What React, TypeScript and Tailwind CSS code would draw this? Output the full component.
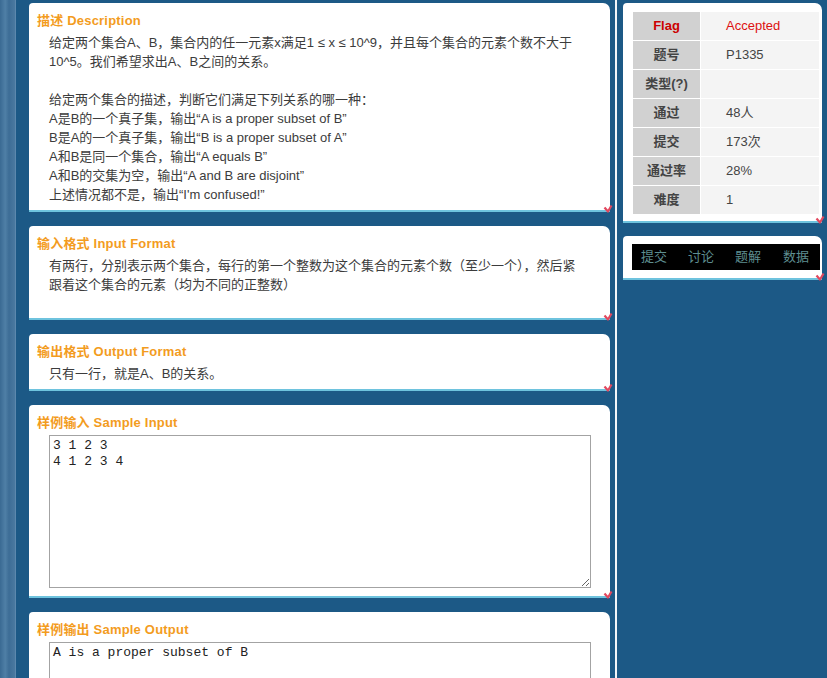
import React from "react";

const cjk = "font-['Liberation_Sans','Noto_Sans_CJK_SC',sans-serif]";

function Corner() {
  return (
    <svg
      className="absolute -right-[3px] -bottom-[4px]"
      width="10"
      height="10"
      viewBox="0 0 10 10"
    >
      <path d="M1.5 3.5 L5 7.5 L8.5 1.5" fill="none" stroke="#e2485e" strokeWidth="2.2" strokeLinejoin="round" />
    </svg>
  );
}

function Card({ title, children, pb = "pb-[6px]" }: { title: string; children: React.ReactNode; pb?: string }) {
  return (
    <div className={`relative rounded-tl-[4px] rounded-tr-[7px] border-b-2 border-[#6ec3de] bg-white pt-[8px] ${pb}`}>
      <div className="pl-[8px] text-[13px] leading-[19px] font-bold tracking-[0.2px] text-[#f39c1e]">{title}</div>
      <div className="mt-[3px] pl-[20px] pr-[22px] text-[13px] leading-[19px] text-[#3c3c3c]">{children}</div>
      <Corner />
    </div>
  );
}

function Sample({ value }: { value: string }) {
  return (
    <textarea
      readOnly
      value={value}
      className="mt-[2px] block h-[153px] w-[542px] border border-[#a3a3a3] bg-white px-[3px] py-[2px] font-['Liberation_Mono',monospace] text-[13px] leading-[16px] text-[#222] outline-none"
    />
  );
}

const rows: [string, string, boolean][] = [
  ["Flag", "Accepted", true],
  ["题号", "P1335", false],
  ["类型(?)", "", false],
  ["通过", "48人", false],
  ["提交", "173次", false],
  ["通过率", "28%", false],
  ["难度", "1", false],
];

export default function App() {
  return (
    <div className={`flex h-[678px] w-[827px] overflow-hidden bg-[#1c5986] ${cjk}`}>
      <div className="w-[15px] shrink-0 bg-[linear-gradient(90deg,#3a6a93_0%,#4f7fa6_35%,#3d6d96_60%,#4a79a0_100%)]" />
      <div className="w-[1px] shrink-0 bg-[#5c88ad]" />
      <div className="w-[13px] shrink-0" />

      <div className="flex w-[581px] shrink-0 flex-col gap-[14px] pt-[3px]">
        <Card title="描述 Description">
          <p>给定两个集合A、B，集合内的任一元素x满足1 ≤ x ≤ 10^9，并且每个集合的元素个数不大于10^5。我们希望求出A、B之间的关系。</p>
          <p className="h-[19px]" />
          <p>给定两个集合的描述，判断它们满足下列关系的哪一种：</p>
          <p>A是B的一个真子集，输出“A is a proper subset of B”</p>
          <p>B是A的一个真子集，输出“B is a proper subset of A”</p>
          <p>A和B是同一个集合，输出“A equals B”</p>
          <p>A和B的交集为空，输出“A and B are disjoint”</p>
          <p>上述情况都不是，输出“I'm confused!”</p>
        </Card>
        <Card title="输入格式 Input Format">
          <p>有两行，分别表示两个集合，每行的第一个整数为这个集合的元素个数（至少一个），然后紧跟着这个集合的元素（均为不同的正整数）</p>
          <p className="h-[18px]" />
        </Card>
        <Card title="输出格式 Output Format">
          <p>只有一行，就是A、B的关系。</p>
        </Card>
        <Card title="样例输入 Sample Input" pb="pb-[8px]">
          <Sample value={"3 1 2 3\n4 1 2 3 4"} />
        </Card>
        <Card title="样例输出 Sample Output" pb="pb-[8px]">
          <Sample value={"A is a proper subset of B"} />
        </Card>
      </div>

      <div className="w-[5px] shrink-0" />
      <div className="w-[2px] shrink-0 bg-[#f2f6f9]" />
      <div className="w-[6px] shrink-0" />

      <div className="flex w-[199px] shrink-0 flex-col gap-[13px] pt-[3px]">
        <div className="relative rounded-tl-[4px] rounded-tr-[7px] border-b-2 border-[#6ec3de] bg-white pt-[8px] pr-[2px] pb-[6px] pl-[9px]">
          <table className="w-[188px] border-collapse text-[13px]">
            <tbody>
              {rows.map(([k, v, red]) => (
                <tr key={k} className="h-[29px]">
                  <td
                    className={`w-[68px] border border-white bg-[#d1d1d1] text-center font-bold ${red ? "text-[#cc0000]" : "text-[#444]"}`}
                  >
                    {k}
                  </td>
                  <td className={`border border-white bg-[#f4f4f4] pl-[25px] ${red ? "text-[#dd1111]" : "text-[#444]"}`}>{v}</td>
                </tr>
              ))}
            </tbody>
          </table>
          <Corner />
        </div>

        <div className="relative rounded-tl-[4px] rounded-tr-[7px] border-b-2 border-[#6ec3de] bg-white pt-[8px] pr-[2px] pb-[8px] pl-[9px]">
          <div className="flex h-[26px] w-[188px] items-center bg-black pl-[9px] text-[13px] text-[#5e8e90]">
            <span className="w-[47px]">提交</span>
            <span className="w-[47px]">讨论</span>
            <span className="w-[48px]">题解</span>
            <span>数据</span>
          </div>
          <Corner />
        </div>
      </div>
    </div>
  );
}
